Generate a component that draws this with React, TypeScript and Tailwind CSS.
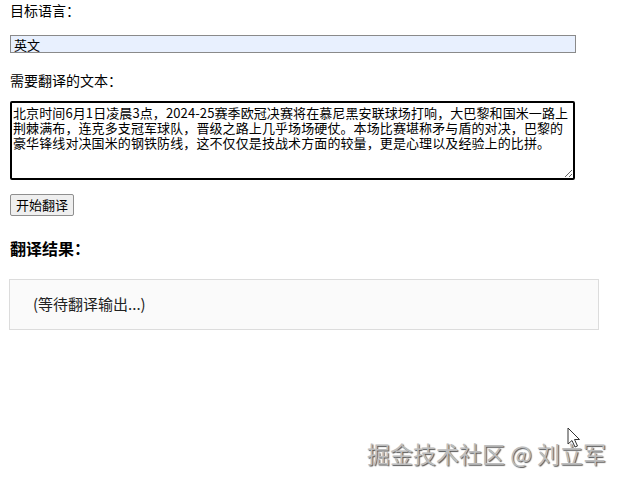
import React, { useState } from 'react';

const SOURCE_TEXT =
  '北京时间6月1日凌晨3点，2024-25赛季欧冠决赛将在慕尼黑安联球场打响，大巴黎和国米一路上荆棘满布，连克多支冠军球队，晋级之路上几乎场场硬仗。本场比赛堪称矛与盾的对决，巴黎的豪华锋线对决国米的钢铁防线，这不仅仅是技战术方面的较量，更是心理以及经验上的比拼。';

const App: React.FC = () => {
  const [lang, setLang] = useState('英文');
  const [text, setText] = useState(SOURCE_TEXT);

  return (
    <div className="relative w-[624px] h-[482px] bg-white text-black overflow-hidden font-['Noto_Sans_CJK_SC',sans-serif]">
      <div className="flex flex-col items-start pl-[10px]">
        <label className="text-[14px] leading-[20px] text-black">目标语言：</label>
        <input
          value={lang}
          onChange={(e) => setLang(e.target.value)}
          className="mt-[15px] w-[566px] h-[18px] bg-[#e8f0fe] border border-[#8a8a8a] px-[3px] text-[13px] leading-[16px] outline-none"
        />

        <label className="mt-[17px] text-[14px] leading-[20px] text-black">需要翻译的文本：</label>
        <textarea
          value={text}
          onChange={(e) => setText(e.target.value)}
          className="mt-[11px] w-[565px] h-[79px] border-2 border-black rounded-[2px] px-[1px] py-[2px] text-[13px] leading-[15px] tracking-[0.1px] outline-none resize-y"
        />

        <button className="mt-[14px] h-[22px] px-[5px] bg-[#efefef] border border-[#8f8f8f] rounded-[2px] text-[13px] leading-[18px]">
          开始翻译
        </button>

        <h3 className="mt-[20px] text-[16px] leading-[24px] font-bold">翻译结果：</h3>

        <div className="mt-[19px] -ml-px w-[590px] h-[51px] bg-[#fafafa] border border-[#dcdcdc] flex items-center pl-[23px] text-[15px] text-[#222]">
          (等待翻译输出...)
        </div>
      </div>

      {/* watermark over the page */}
      <div className="absolute left-[367px] top-[439px] text-[23px] leading-[28px] text-[#bdbdbd] whitespace-nowrap [text-shadow:1px_1px_1px_#555,-1px_-1px_0_#fff]">
        掘金技术社区 @ 刘立军
      </div>

      {/* mouse pointer */}
      <svg className="absolute left-[567px] top-[427px]" width="14" height="22" viewBox="0 0 14 22">
        <path d="M1 1 L1 17 L5 13.5 L8 20 L10.5 19 L7.5 12.5 L12.5 12.5 Z" fill="#fff" stroke="#333" strokeWidth="1" strokeLinejoin="round" />
      </svg>
    </div>
  );
};

export default App;
